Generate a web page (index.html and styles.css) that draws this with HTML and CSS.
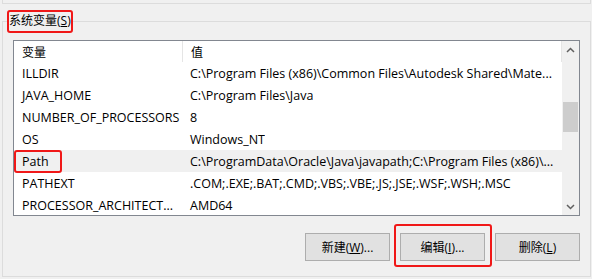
FILE: index.html
```html
<!DOCTYPE html>
<html lang="zh-CN">
<head>
    <meta charset="UTF-8">
    <title>系统变量</title>
    <link rel="stylesheet" href="styles.css">
</head>
<body>
    <div class="prevGroup"></div>
    <div class="group">
        <div class="groupLabel marked">系统变量(<u>S</u>)</div>
        <div class="listBox">
            <div class="listMain">
                <div class="listHeader">
                    <div class="colName">变量</div>
                    <div class="colValue">值</div>
                </div>
                <div class="row"><div class="colName">ILLDIR</div><div class="colValue">C:\Program Files (x86)\Common Files\Autodesk Shared\Mate...</div></div>
                <div class="row"><div class="colName">JAVA_HOME</div><div class="colValue">C:\Program Files\Java</div></div>
                <div class="row"><div class="colName">NUMBER_OF_PROCESSORS</div><div class="colValue">8</div></div>
                <div class="row"><div class="colName">OS</div><div class="colValue">Windows_NT</div></div>
                <div class="row selected"><div class="colName marked markPath">Path</div><div class="colValue">C:\ProgramData\Oracle\Java\javapath;C:\Program Files (x86)\...</div></div>
                <div class="row"><div class="colName">PATHEXT</div><div class="colValue">.COM;.EXE;.BAT;.CMD;.VBS;.VBE;.JS;.JSE;.WSF;.WSH;.MSC</div></div>
                <div class="row"><div class="colName">PROCESSOR_ARCHITECT...</div><div class="colValue">AMD64</div></div>
            </div>
            <div class="scrollBar">
                <div class="arrow">
                    <svg width="9" height="6" viewBox="0 0 9 6"><path d="M1 5 L4.5 1.5 L8 5" fill="none" stroke="#606060" stroke-width="1.5"/></svg>
                </div>
                <div class="track"><div class="thumb"></div></div>
                <div class="arrow">
                    <svg width="9" height="6" viewBox="0 0 9 6"><path d="M1 1 L4.5 4.5 L8 1" fill="none" stroke="#606060" stroke-width="1.5"/></svg>
                </div>
            </div>
        </div>
        <div class="buttons">
            <button class="btn">新建(<u>W</u>)...</button>
            <button class="btn marked markBtn">编辑(<u>I</u>)...</button>
            <button class="btn">删除(<u>L</u>)</button>
        </div>
    </div>
</body>
</html>
```

FILE: styles.css
```css
body {
    margin: 0;
    background-color: #f0f0f0;
    font-family: "Open Sans", "Noto Sans CJK SC", sans-serif;
    font-size: 12.5px;
    color: #000;
    width: 592px;
    height: 279px;
    overflow: hidden;
}
.prevGroup {
    height: 3px;
    margin: 0 1px 0 2px;
    border: 1px solid #dcdcdc;
    border-top: none;
}
.group {
    margin: 17px 1px 0 2px;
    padding: 0 10px;
    height: 254px;
    border: 1px solid #dcdcdc;
}
.groupLabel {
    display: table;
    margin: -10px 0 0 -5px;
    padding: 0 1px;
    line-height: 18px;
    font-size: 12px;
    background-color: #f0f0f0;
}
.marked {
    position: relative;
}
.marked::after {
    content: "";
    position: absolute;
    border: 2.5px solid #f01818;
    border-radius: 3px;
}
.groupLabel::after {
    left: -1px;
    right: -1px;
    top: -2px;
    bottom: -3px;
}
.listBox {
    display: flex;
    margin-top: 10px;
    height: 174px;
    border: 1px solid #828790;
    background-color: #fff;
    overflow: hidden;
}
.listMain {
    flex: 1;
    overflow: hidden;
}
.listHeader {
    display: flex;
    height: 21px;
    align-items: center;
    border-right: 1px solid #e5e5e5;
}
.listHeader .colName {
    border-right: 1px solid #e5e5e5;
    align-self: stretch;
    display: flex;
    align-items: center;
    font-size: 12px;
}
.listHeader .colValue {
    font-size: 12px;
}
.row {
    display: flex;
    height: 22px;
    align-items: center;
    white-space: nowrap;
}
.colName {
    width: 160px;
    padding-left: 8px;
    flex-shrink: 0;
}
.colValue {
    padding-left: 8px;
    white-space: nowrap;
    overflow: hidden;
}
.selected {
    background-color: #f0f0f0;
}
.markPath::after {
    left: 0;
    width: 44px;
    top: -3px;
    bottom: -3px;
}
.scrollBar {
    width: 17px;
    display: flex;
    flex-direction: column;
    background-color: #f0f0f0;
}
.arrow {
    height: 17px;
    display: flex;
    align-items: center;
    justify-content: center;
}
.track {
    flex: 1;
    padding: 0 1px;
}
.thumb {
    margin-top: 44px;
    height: 30px;
    background-color: #cdcdcd;
}
.buttons {
    display: flex;
    justify-content: flex-end;
    gap: 10px;
    margin-top: 17px;
}
.btn {
    width: 85px;
    height: 28px;
    background-color: #e1e1e1;
    border: 1px solid #adadad;
    font-family: inherit;
    font-size: 12px;
    color: #000;
    padding: 0;
}
.markBtn::after {
    left: -7px;
    right: -8px;
    top: -10px;
    bottom: -7px;
}
```
